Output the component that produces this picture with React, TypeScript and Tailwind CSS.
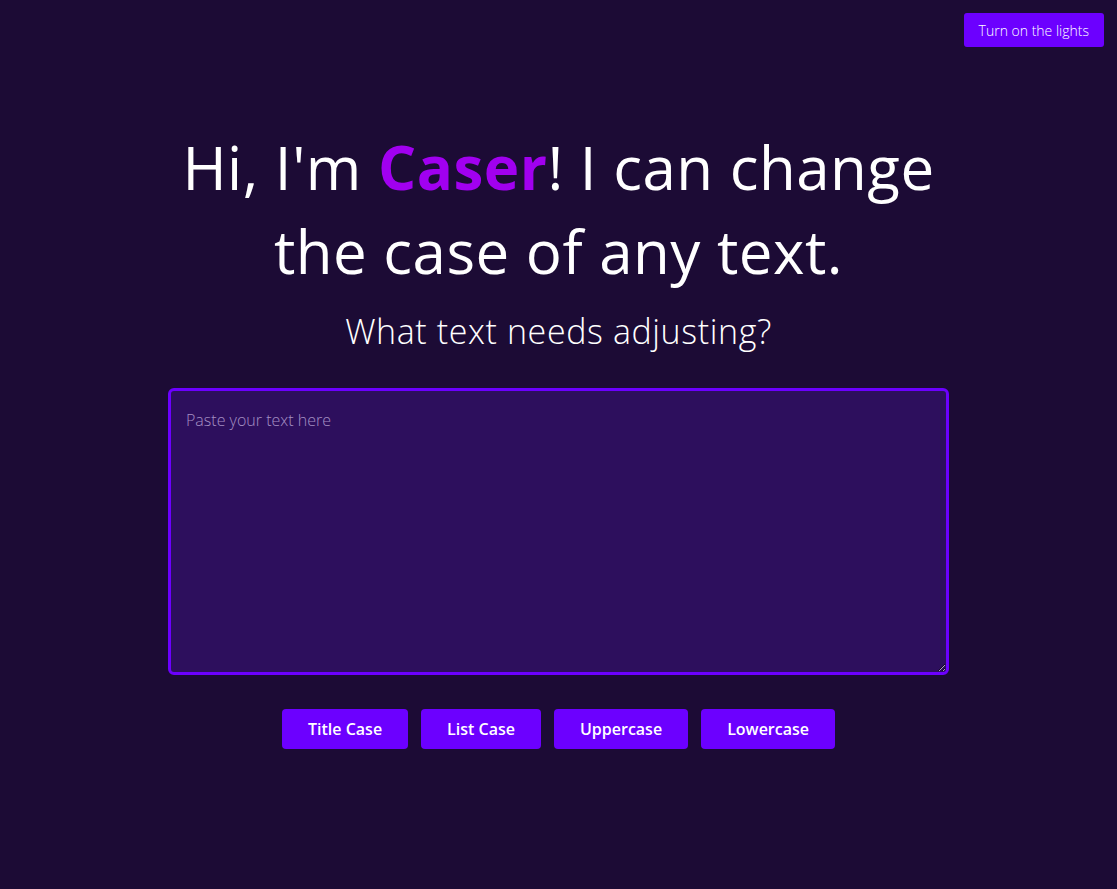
import { useState } from 'react'

const BUTTONS = ['Title Case', 'List Case', 'Uppercase', 'Lowercase']

export default function App() {
  const [text, setText] = useState('')

  return (
    <div className="min-h-[889px] bg-[#1c0b35] font-['Open_Sans',sans-serif] text-white">
      {/* Header */}
      <div className="flex justify-end px-[13px] pt-[13px]">
        <button className="h-[34px] rounded-[3px] bg-[#6c00ff] px-[15px] text-[14px] font-light">
          Turn on the lights
        </button>
      </div>

      <div className="flex flex-col items-center">
        <h1 className="mt-[78px] text-center text-[60px] font-medium leading-[84px] tracking-[0.5px]">
          Hi, I'm <span className="font-bold text-[#a100f0]">Caser</span>! I can change
          <br />
          the case of any text.
        </h1>
        <h2 className="mt-[16px] text-[34px] font-light leading-[45px] tracking-[0.6px]">
          What text needs adjusting?
        </h2>

        <textarea
          value={text}
          onChange={(e) => setText(e.target.value)}
          placeholder="Paste your text here"
          className="mt-[34px] h-[287px] w-[781px] rounded-[6px] border-[3px] border-[#6c00ff] bg-[#2d0f5d] px-[15px] py-[17px] text-[16px] font-light text-white placeholder:text-[#a58fc4] focus:outline-none"
        />

        <div className="mt-[34px] flex gap-[13px]">
          {BUTTONS.map((b) => (
            <button
              key={b}
              className="h-[40px] rounded-[4px] bg-[#6c00ff] px-[26px] text-[16px] font-semibold"
            >
              {b}
            </button>
          ))}
        </div>
      </div>
    </div>
  )
}
